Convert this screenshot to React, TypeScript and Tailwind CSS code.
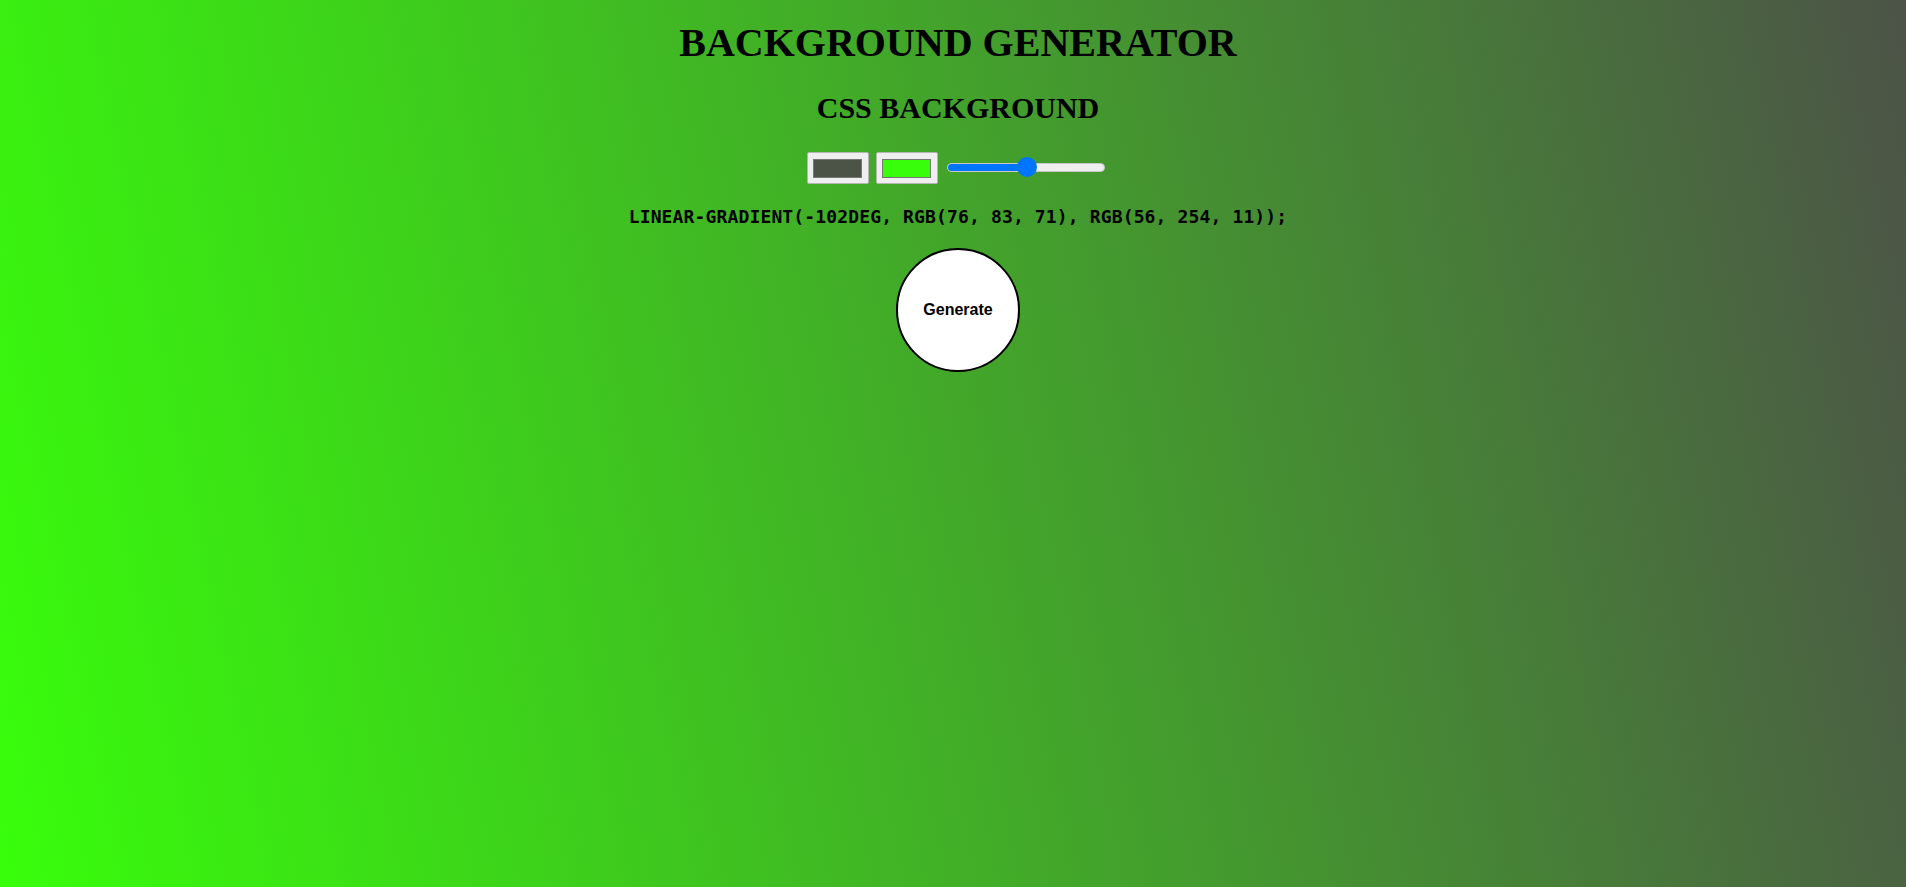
import React from "react";

function ColorBox({ color }: { color: string }) {
  return (
    <div className="w-[62px] h-[32px] bg-[#efefef] border border-[#b5b5b5] rounded-[2px] flex items-center justify-center">
      <div className={`w-[49px] h-[19px] border border-[#777777] ${color}`} />
    </div>
  );
}

function Slider() {
  return (
    <div className="relative w-[158px] h-[20px] flex items-center">
      <div className="w-full h-[9px] rounded-full bg-[#efefef] border border-[#c8c8c8] overflow-hidden flex">
        <div className="w-[80px] h-full bg-[#0075ff]" />
      </div>
      <div className="absolute left-[70px] top-0 w-[20px] h-[20px] rounded-full bg-[#0075ff]" />
    </div>
  );
}

export default function App() {
  return (
    <div className="min-h-screen w-full bg-[linear-gradient(-102deg,rgb(76,83,71),rgb(56,254,11))] pl-[10px] flex flex-col items-center">
      <h1 className="mt-[21px] text-[40px] leading-[44px] font-bold text-black font-['Liberation_Serif',serif]">
        BACKGROUND GENERATOR
      </h1>
      <h2 className="mt-[26px] text-[30px] leading-[34px] font-bold text-black font-['Liberation_Serif',serif]">
        CSS BACKGROUND
      </h2>
      <div className="mt-[27px] flex items-center gap-[7px] mr-[5px]">
        <ColorBox color="bg-[#4c5347]" />
        <ColorBox color="bg-[#38fe0b]" />
        <div className="ml-[2px] mb-[2px]">
          <Slider />
        </div>
      </div>
      <p className="mt-[22px] text-[18px] leading-[22px] tracking-[0.14px] font-bold text-black uppercase font-['DejaVu_Sans_Mono',monospace]">
        linear-gradient(-102deg, rgb(76, 83, 71), rgb(56, 254, 11));
      </p>
      <button className="mt-[20px] w-[124px] h-[124px] rounded-full bg-white border-2 border-black text-[16px] font-bold text-black font-['Liberation_Sans',Arial,sans-serif] flex items-center justify-center">
        Generate
      </button>
    </div>
  );
}
